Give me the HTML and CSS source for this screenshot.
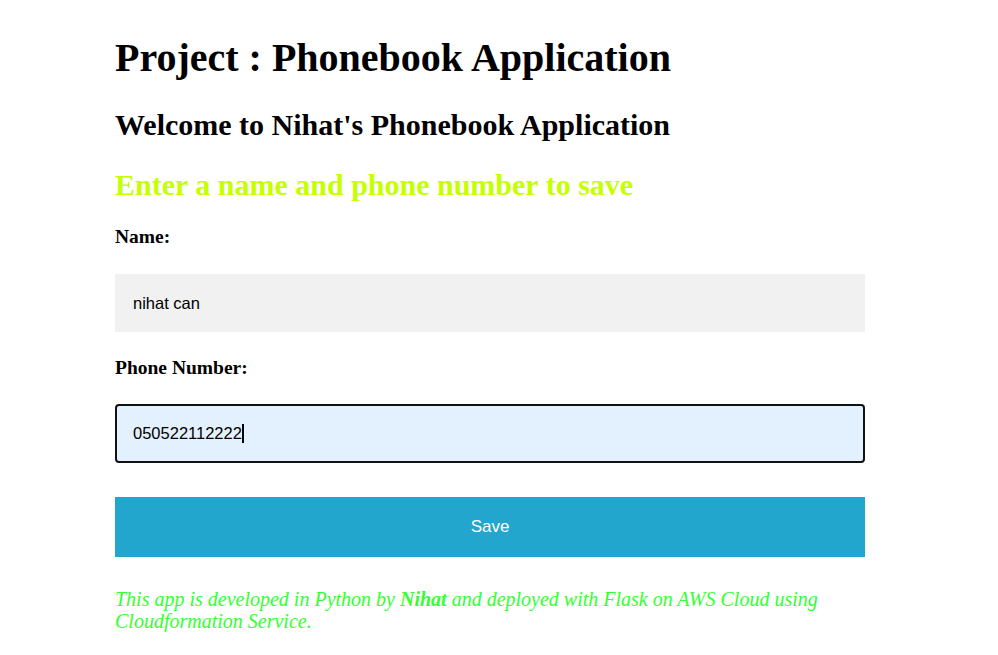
FILE: index.html
```html
<!DOCTYPE html>
<html>
<head>
<meta charset="utf-8">
<link rel="stylesheet" href="styles.css">
</head>
<body>
<div class="page">
  <h1 class="title">Project : Phonebook Application</h1>
  <h2 class="welcome">Welcome to Nihat's Phonebook Application</h2>
  <h3 class="prompt">Enter a name and phone number to save</h3>
  <form class="form">
    <label class="label">Name:</label>
    <input class="field field-name" type="text" value="nihat can">
    <label class="label label-phone">Phone Number:</label>
    <div class="field field-phone"><span>050522112222</span><span class="caret"></span></div>
    <button class="save" type="button">Save</button>
  </form>
  <p class="footer">This app is developed in Python by <b>Nihat</b> and deployed with Flask on AWS Cloud using Cloudformation Service.</p>
</div>
</body>
</html>
```
FILE: styles.css
```css
body {
  margin: 0;
  font-family: "Liberation Serif", "Times New Roman", serif;
  background: #fff;
  color: #000;
}
.page {
  width: 750px;
  margin-left: 115px;
  padding-top: 35px;
}
.title {
  font-size: 40px;
  margin: 0;
  line-height: 46px;
}
.welcome {
  font-size: 30px;
  margin: 27px 0 0 0;
  line-height: 34px;
}
.prompt {
  font-size: 30px;
  color: #c6ff00;
  margin: 26px 0 0 0;
  line-height: 34px;
}
.form {
  display: flex;
  flex-direction: column;
  margin-top: 24px;
}
.label {
  font-weight: bold;
  font-size: 19.5px;
  line-height: 22px;
}
.label-phone {
  margin-top: 25px;
}
.field {
  box-sizing: border-box;
  width: 750px;
  font-family: "Liberation Sans", Arial, sans-serif;
  font-size: 16.5px;
  color: #000;
  padding: 0 18px;
  margin: 26px 0 0 0;
}
.field-name {
  height: 58px;
  background: #f1f1f1;
  border: none;
  outline: none;
}
.field-phone {
  height: 59px;
  background: #e3f0fd;
  border: 2px solid #111;
  border-radius: 4px;
  display: flex;
  align-items: center;
  padding-left: 16px;
  margin-top: 25px;
}
.caret {
  display: inline-block;
  width: 2px;
  height: 19px;
  background: #000;
}
.save {
  width: 750px;
  height: 60px;
  margin-top: 34px;
  border: none;
  background: #22a6cd;
  color: #fff;
  font-family: "Liberation Sans", Arial, sans-serif;
  font-size: 17px;
  padding: 0;
}
.footer {
  color: #33ff33;
  font-style: italic;
  font-size: 20px;
  line-height: 22px;
  margin: 31px 0 0 0;
}
```
